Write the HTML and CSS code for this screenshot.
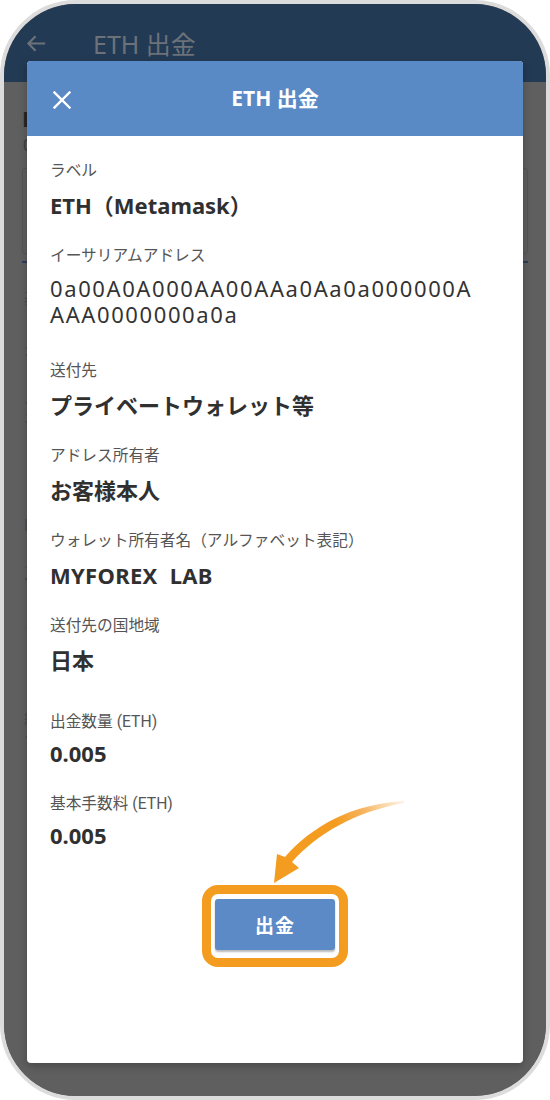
FILE: index.html
```html
<!DOCTYPE html>
<html lang="ja">
<head>
<meta charset="utf-8">
<title>ETH 出金</title>
<link rel="stylesheet" href="styles.css">
</head>
<body>
<div class="phone">
  <div class="screen">
    <header class="app-bar">
      <svg class="back" viewBox="0 0 24 24" aria-hidden="true"><path d="M21 12H4M11 4.5L3.5 12 11 19.5"/></svg>
      <span class="app-title">ETH 出金</span>
    </header>
    <main class="app-body">
      <div class="bg-h">E</div>
      <div class="bg-sub">0</div>
      <div class="bg-card"></div>
      <div class="bg-tab"></div>
      <div class="bg-p bg-first">基</div>
      <div class="bg-p bg-blue bg-gap">オ</div>
      <div class="bg-p bg-gap2">イ</div>
      <div class="bg-p">ネ</div>
      <div class="bg-p bg-gap">ミ</div>
      <div class="bg-p bg-gap">l</div>
      <div class="bg-p bg-gap3">ス</div>
      <div class="bg-p">&lt;</div>
      <div class="bg-p bg-gap">フ</div>
      <div class="bg-p">ミ</div>
      <div class="bg-p">ン</div>
      <div class="bg-p bg-gap">終</div>
      <div class="bg-p">イ</div>
    </main>
  </div>

  <section class="modal">
    <div class="modal-head">
      <svg class="close" viewBox="0 0 18 18" aria-hidden="true"><path d="M1.5 1.5L16.5 16.5M16.5 1.5L1.5 16.5"/></svg>
      <h1 class="modal-title">ETH 出金</h1>
    </div>
    <div class="modal-body">
      <div class="field">
        <div class="label">ラベル</div>
        <div class="value">ETH（Metamask）</div>
      </div>
      <div class="field">
        <div class="label label-addr">イーサリアムアドレス</div>
        <div class="value addr">0a00A0A000AA00AAa0Aa0a000000AAAA0000000a0a</div>
      </div>
      <div class="field after-addr">
        <div class="label">送付先</div>
        <div class="value">プライベートウォレット等</div>
      </div>
      <div class="field">
        <div class="label">アドレス所有者</div>
        <div class="value">お客様本人</div>
      </div>
      <div class="field">
        <div class="label">ウォレット所有者名（アルファベット表記）</div>
        <div class="value latin">MYFOREX&nbsp; LAB</div>
      </div>
      <div class="field">
        <div class="label">送付先の国地域</div>
        <div class="value">日本</div>
      </div>
      <div class="field after-country">
        <div class="label">出金数量 (ETH)</div>
        <div class="value num">0.005</div>
      </div>
      <div class="field">
        <div class="label">基本手数料 (ETH)</div>
        <div class="value num">0.005</div>
      </div>
      <div class="action">
        <div class="highlight">
          <button class="btn" type="button">出金</button>
        </div>
      </div>
    </div>
  </section>

  <svg class="arrow" viewBox="240 790 180 100" aria-hidden="true">
    <defs>
      <linearGradient id="ag" gradientUnits="userSpaceOnUse" x1="404" y1="800" x2="300" y2="855">
        <stop offset="0" stop-color="#f6b660" stop-opacity="0.15"/>
        <stop offset="0.35" stop-color="#f4a640" stop-opacity="0.85"/>
        <stop offset="0.6" stop-color="#f39c20"/>
        <stop offset="1" stop-color="#f39c20"/>
      </linearGradient>
    </defs>
    <path fill="url(#ag)" d="M404 801 C352 804 312 826 285 857 L277 854 L274 883 L299 868 L292 862 C317 834 354 812 404 803 Z"/>
  </svg>
</div>
</body>
</html>
```

FILE: styles.css
```css
* { box-sizing: border-box; }

html, body {
  margin: 0;
  padding: 0;
  background: #ffffff;
}

body {
  width: 550px;
  height: 1100px;
  font-family: "Noto Sans", "Noto Sans CJK JP", sans-serif;
}

.phone {
  position: relative;
  width: 550px;
  height: 1100px;
  border: 4px solid #dcdcdc;
  border-radius: 76px;
  overflow: hidden;
  background: #5f5f5f;
}

.screen {
  display: flex;
  flex-direction: column;
  height: 100%;
}

/* dimmed app behind the dialog */
.app-bar {
  height: 78px;
  flex: none;
  display: flex;
  align-items: center;
  padding-left: 21px;
  background: #233a55;
}

.back {
  width: 23px;
  height: 23px;
  fill: none;
  stroke: #6c7279;
  stroke-width: 2.2;
}

.app-title {
  margin-left: 45px;
  font-size: 25px;
  color: #6c7279;
  font-family: "Noto Sans", "Noto Sans CJK JP", sans-serif;
}

.app-body {
  flex: 1;
  padding: 22px 18px 0 18px;
  background: #5f5f5f;
  font-family: "Noto Sans", "Noto Sans CJK JP", sans-serif;
}

.bg-h {
  width: fit-content;
  font-size: 21px;
  font-weight: 700;
  line-height: 30px;
  color: #262626;
}

.bg-sub {
  width: fit-content;
  font-size: 16px;
  line-height: 22px;
  color: #3c3c3c;
  padding-left: 1px;
}

.bg-card {
  margin-top: 12px;
  height: 86px;
  border: 1px solid #545454;
  border-radius: 3px;
}

.bg-tab {
  margin-top: 7px;
  height: 2px;
  background: #2e3d5c;
}

.bg-p {
  width: fit-content;
  font-size: 16px;
  line-height: 17px;
  color: #4c4c4c;
  padding-left: 2px;
}

.bg-first { margin-top: 27px; }
.bg-blue { color: #3f4a5e; }
.bg-gap { margin-top: 36px; }
.bg-gap2 { margin-top: 34px; }
.bg-gap3 { margin-top: 20px; }

/* dialog */
.modal {
  position: absolute;
  left: 23px;
  top: 57px;
  width: 496px;
  height: 1002px;
  background: #ffffff;
  border-radius: 4px;
  overflow: hidden;
  box-shadow: 0 3px 8px rgba(0, 0, 0, 0.25);
}

.modal-head {
  position: relative;
  height: 75px;
  display: flex;
  align-items: center;
  justify-content: center;
  background: #5a8ac6;
}

.close {
  position: absolute;
  left: 26px;
  top: 30px;
  width: 18px;
  height: 18px;
  fill: none;
  stroke: #ffffff;
  stroke-width: 2.4;
  stroke-linecap: square;
}

.modal-title {
  margin: 0;
  font-size: 21px;
  font-weight: 700;
  color: #ffffff;
  line-height: 1;
  font-family: "Noto Sans", "Noto Sans CJK JP", sans-serif;
}

.modal-body {
  padding: 24px 23px 0 23px;
  display: flex;
  flex-direction: column;
}

.field + .field { margin-top: 25px; }
.field.after-addr { margin-top: 33px; }
.field.after-country { margin-top: 36px; }

.label {
  font-family: Roboto, "Noto Sans CJK JP", sans-serif;
  font-size: 15.7px;
  line-height: 22px;
  color: #555555;
  white-space: nowrap;
}

.value {
  margin-top: 8px;
  font-family: "Noto Sans", "Noto Sans CJK JP", sans-serif;
  font-size: 22px;
  line-height: 30px;
  font-weight: 700;
  color: #303030;
  white-space: nowrap;
}

.label-addr { margin-bottom: 2px; }

.value.addr {
  width: 430px;
  font-weight: 400;
  line-height: 26px;
  letter-spacing: 1.6px;
  color: #333333;
  white-space: normal;
  word-break: break-all;
}

.value.latin { letter-spacing: 0.3px; }

.value.num { margin-top: 5px; }

.action {
  margin-top: 35px;
  display: flex;
  justify-content: center;
}

.highlight {
  width: 146px;
  height: 82px;
  padding: 5px 4px 8px 4px;
  border: 9px solid #f39c20;
  border-radius: 16px;
  background: #ffffff;
}

.btn {
  display: block;
  width: 100%;
  height: 100%;
  margin: 0;
  padding: 0;
  border: none;
  border-radius: 3px;
  background: #5b8ac6;
  box-shadow: 0 2px 2px rgba(0, 0, 0, 0.28);
  color: #ffffff;
  font-family: "Noto Sans CJK JP", sans-serif;
  font-size: 19px;
  font-weight: 700;
  letter-spacing: 1px;
}

.arrow {
  position: absolute;
  left: 236px;
  top: 786px;
  width: 180px;
  height: 100px;
  pointer-events: none;
}
```
